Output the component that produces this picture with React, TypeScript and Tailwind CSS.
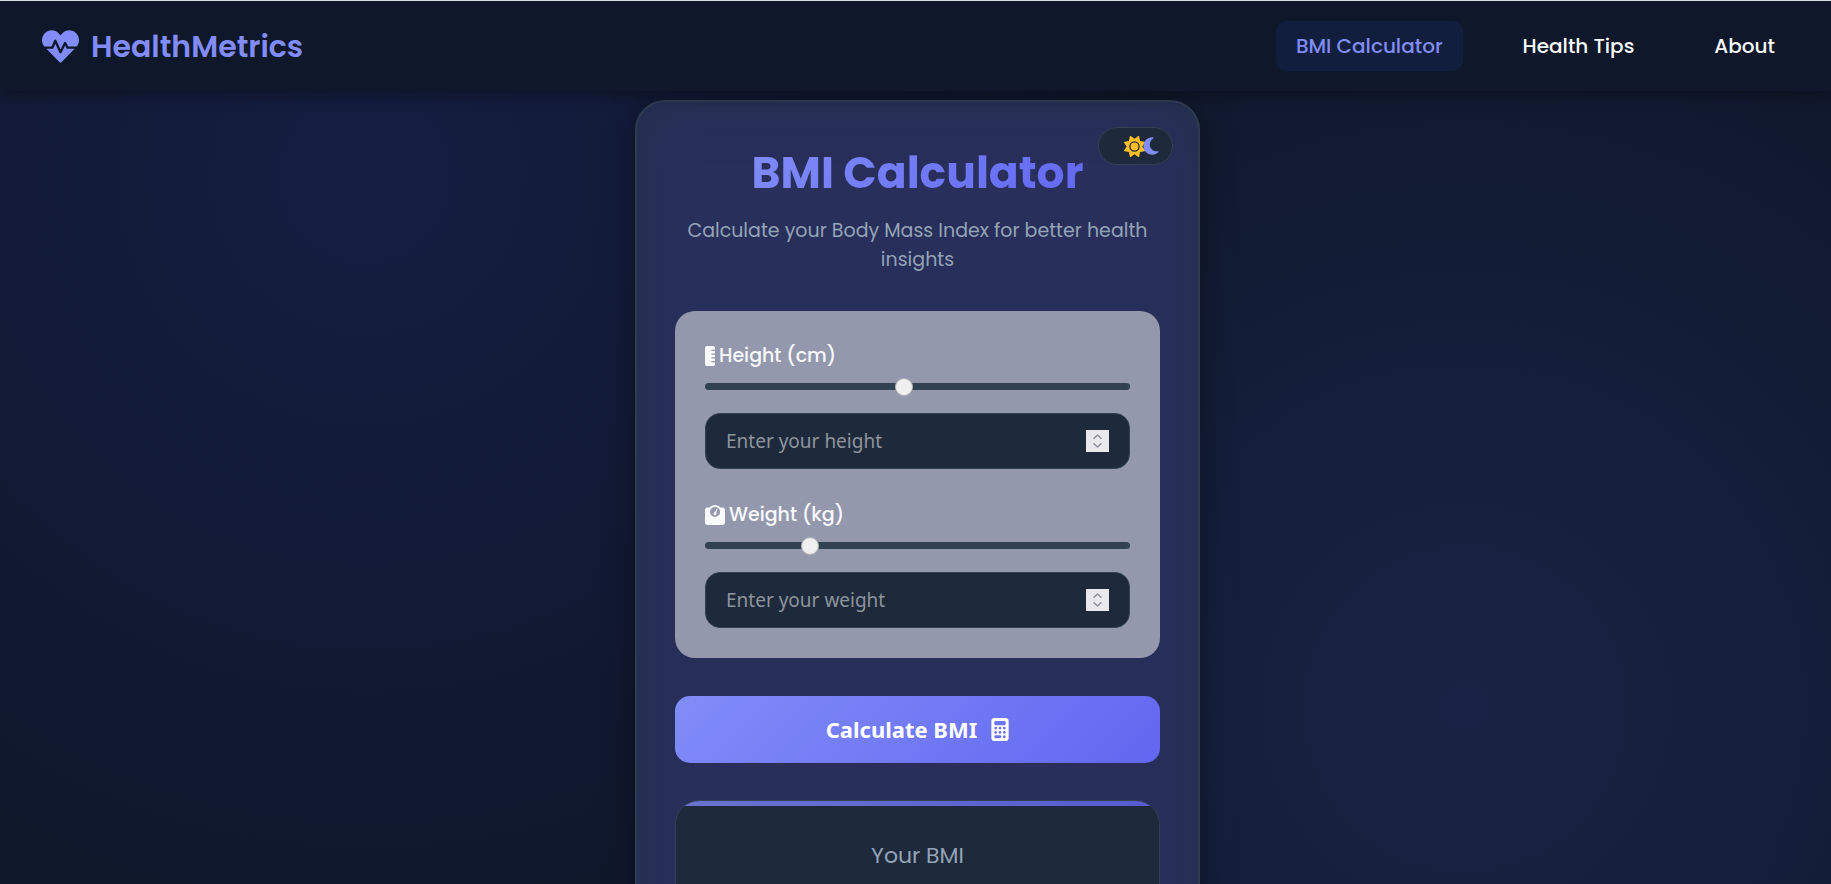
import { useState, type ReactNode } from "react";
import { FaHeartbeat } from "react-icons/fa";
import { FaRulerVertical, FaWeightScale, FaCalculator, FaSun, FaMoon } from "react-icons/fa6";

function NavLink({ href, active, children }: { href: string; active?: boolean; children: ReactNode }) {
  return (
    <a
      href={href}
      className={
        active
          ? "rounded-[10px] bg-[#121e3e] px-5 py-[10px] text-[#818cf8]"
          : "rounded-[10px] px-5 py-[10px] text-[#f8fafc]"
      }
    >
      {children}
    </a>
  );
}

type FieldProps = {
  id: string;
  label: string;
  icon: ReactNode;
  placeholder: string;
  min: number;
  max: number;
  initial: number;
};

function Field({ id, label, icon, placeholder, min, max, initial }: FieldProps) {
  const [slider, setSlider] = useState(initial);
  const [value, setValue] = useState("");

  const update = (next: number) => {
    const clamped = Math.min(max, Math.max(min, next));
    setSlider(clamped);
    setValue(String(clamped));
  };

  return (
    <div>
      <label htmlFor={id} className="flex h-[30px] items-center gap-1 text-[19px] font-medium text-[#f8fafc]">
        {icon}
        {label}
      </label>
      <input
        type="range"
        aria-label={label}
        min={min}
        max={max}
        value={slider}
        onChange={(e) => update(Number(e.target.value))}
        className="mt-3 block h-[7px] w-full appearance-none rounded-full bg-[#334155] [&::-webkit-slider-thumb]:size-[18px] [&::-webkit-slider-thumb]:appearance-none [&::-webkit-slider-thumb]:rounded-full [&::-webkit-slider-thumb]:border [&::-webkit-slider-thumb]:border-[#b2b2b2] [&::-webkit-slider-thumb]:bg-[#efefef]"
      />
      <div className="mt-[23px] flex h-14 items-center rounded-[15px] border border-[#334155] bg-[#1e293b] px-5">
        <input
          id={id}
          type="number"
          min={min}
          max={max}
          value={value}
          placeholder={placeholder}
          onChange={(e) => setValue(e.target.value)}
          className="min-w-0 flex-1 appearance-none bg-transparent font-['Noto_Sans',sans-serif] text-[19px] text-[#f8fafc] outline-none [-moz-appearance:textfield] placeholder:text-[#8d949d] [&::-webkit-inner-spin-button]:appearance-none"
        />
        <div className="flex h-[22px] w-[23px] flex-col bg-[#e9e9ed] text-[#8f8f9d]">
          <button
            type="button"
            aria-label={`Increase ${label}`}
            onClick={() => update(slider + 1)}
            className="flex flex-1 items-end justify-center pb-[2px]"
          >
            <svg width="9" height="5" viewBox="0 0 9 5" fill="none" stroke="currentColor" strokeWidth="1.5" strokeLinecap="round" strokeLinejoin="round">
              <path d="M1 4.2 4.5 1 8 4.2" />
            </svg>
          </button>
          <button
            type="button"
            aria-label={`Decrease ${label}`}
            onClick={() => update(slider - 1)}
            className="flex flex-1 items-start justify-center pt-[2px]"
          >
            <svg width="9" height="5" viewBox="0 0 9 5" fill="none" stroke="currentColor" strokeWidth="1.5" strokeLinecap="round" strokeLinejoin="round">
              <path d="M1 .8 4.5 4 8 .8" />
            </svg>
          </button>
        </div>
      </div>
    </div>
  );
}

export default function App() {
  return (
    <div className="h-screen overflow-hidden bg-[#0f172a] bg-[radial-gradient(circle_at_20%_20%,rgba(60,75,225,0.13)_0%,transparent_50%),radial-gradient(circle_at_80%_80%,rgba(75,105,225,0.15)_0%,transparent_50%)] font-[Poppins,Inter,sans-serif]">
      <header className="relative z-10 flex h-[91px] items-center justify-between border-t border-[#d9dfe2] bg-[#0f172a] pr-9 pl-[42px] shadow-[0_4px_14px_rgba(0,0,0,0.35)]">
        <a href="#home" className="flex items-center gap-3 text-[30px] font-semibold text-[#818cf8]">
          <FaHeartbeat className="size-[37px]" />
          HealthMetrics
        </a>
        <nav className="flex items-center gap-10 text-[20px] leading-[30px] font-medium">
          <NavLink href="#bmi" active>
            BMI Calculator
          </NavLink>
          <NavLink href="#tips">Health Tips</NavLink>
          <NavLink href="#about">About</NavLink>
        </nav>
      </header>

      <main className="flex justify-center pt-[9px] pl-1">
        <section className="relative w-full max-w-[565px] rounded-[30px] border-2 border-[#2f3b50] bg-[#282f5b] px-[38px] pt-[38px] pb-10 shadow-[0_8px_32px_rgba(0,0,0,0.4),inset_0_0_50px_#23304a]">
          <button
            type="button"
            aria-label="Toggle theme"
            className="absolute top-[25px] right-[25px] flex h-[38px] w-[75px] items-center justify-end rounded-full border border-[#334155] bg-[#1e293b] pr-[13px]"
          >
            <FaSun className="size-[21px] text-[#fbbf24]" />
            <FaMoon className="-ml-[2px] h-5 w-4 text-[#818cf8]" />
          </button>

          <h1 className="text-center text-[44px] leading-[66px] font-bold">
            <span className="inline-block bg-linear-135 from-[#818cf8] to-[#6366f1] bg-clip-text text-transparent">
              BMI Calculator
            </span>
          </h1>
          <p className="mt-[10px] text-center text-[19px] leading-[29px] text-[#94a3b8]">
            Calculate your Body Mass Index for better health insights
          </p>

          <form onSubmit={(e) => e.preventDefault()}>
            <div className="mt-[37px] flex flex-col gap-[31px] rounded-[20px] bg-[#9498ad] p-[30px]">
              <Field
                id="height"
                label="Height (cm)"
                icon={<FaRulerVertical className="h-5 w-[10px]" />}
                placeholder="Enter your height"
                min={100}
                max={250}
                initial={170}
              />
              <Field
                id="weight"
                label="Weight (kg)"
                icon={<FaWeightScale className="size-5" />}
                placeholder="Enter your weight"
                min={30}
                max={200}
                initial={70}
              />
            </div>
            {/* Each field is 128px tall: label, slider and value box */}
            <button
              type="submit"
              className="mt-[38px] flex h-[67px] w-full items-center justify-center gap-[14px] rounded-[15px] bg-linear-135 from-[#818cf8] to-[#6366f1] font-['Noto_Sans',sans-serif] text-[22px] font-bold text-white"
            >
              Calculate BMI
              <FaCalculator className="h-[23px] w-[18px]" />
            </button>
          </form>

          <div className="mt-[37px] h-60 overflow-hidden rounded-3xl border border-[#334155] bg-[#1e293b]">
            <div className="h-[5px] bg-linear-to-r from-[#6a74d0] to-[#575bd0]" />
            <p className="mt-[34px] text-center text-[22px] leading-8 text-[#94a3b8]">Your BMI</p>
          </div>
        </section>
      </main>
    </div>
  );
}
